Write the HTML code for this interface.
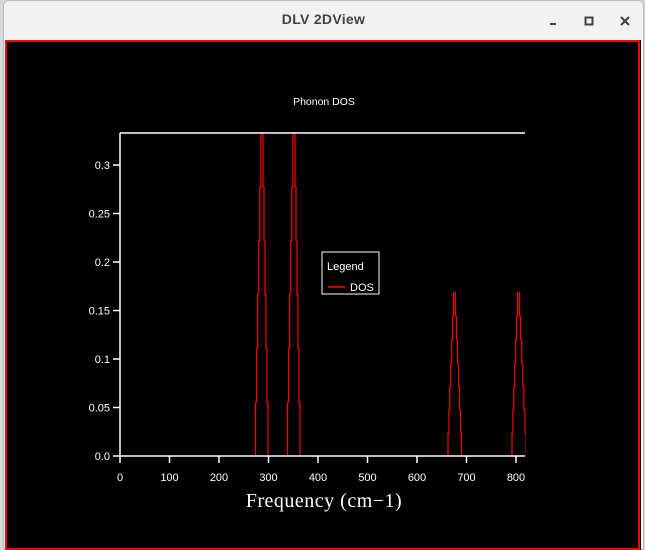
<!DOCTYPE html><html><head><style>
body{margin:0;width:645px;height:550px;overflow:hidden;background:#d8d8d8;font-family:"Liberation Sans",sans-serif}
#win{position:absolute;left:3px;top:0;width:641px;height:550px;background:#f2f2f2;border-radius:6px 6px 0 0;border:1px solid #bbb;box-sizing:border-box}
#title{position:absolute;left:0;right:0;top:10px;text-align:center;font-size:14px;color:#3c4548;font-weight:bold;letter-spacing:0.3px}
#plot{position:absolute;left:5px;top:40px;width:636px;height:510px}
</style></head><body>
<div id="win"><div id="title">DLV 2DView</div>
<svg style="position:absolute;right:84px;top:14px" width="12" height="12"><rect x="3" y="8" width="6" height="2" fill="#3c4548"/></svg>
<svg style="position:absolute;right:48px;top:14px" width="12" height="12"><rect x="2.5" y="2.5" width="7" height="7" fill="none" stroke="#3c4548" stroke-width="2"/></svg>
<svg style="position:absolute;right:12px;top:14px" width="12" height="12"><path d="M2 2L10 10M10 2L2 10" stroke="#3c4548" stroke-width="2.2"/></svg>
</div>
<svg id="plot" viewBox="5 40 636 510" width="636" height="510" style="position:absolute;left:5px;top:40px">
<rect x="5" y="40" width="636" height="510" fill="#000"/>
<rect x="6" y="41" width="633" height="508" fill="none" stroke="#f00" stroke-width="2"/>
<g id="g" font-family="Liberation Sans,sans-serif" font-size="11" fill="#fff"></g>
</svg>
<script>
var g=document.getElementById('g'),s='';
s+='<text x="324" y="105" text-anchor="middle" font-size="10.5">Phonon DOS</text>';
var ys=[0,0.05,0.1,0.15,0.2,0.25,0.3],yl=['0.0','0.05','0.1','0.15','0.2','0.25','0.3'];
ys.forEach(function(v,i){var y=456-v*970;s+='<path d="M113 '+y+'H120" stroke="#fff" stroke-width="1.5"/><text x="110" y="'+(y+4)+'" text-anchor="end">'+yl[i]+'</text>';});
for(var k=0;k<=800;k+=100){var x=120+k*0.495;s+='<path d="M'+x+' 456V463" stroke="#fff" stroke-width="1.5"/><text x="'+x+'" y="481" text-anchor="middle">'+k+'</text>';}
s+='<text x="324" y="507" text-anchor="middle" font-family="Liberation Serif,serif" font-size="20" letter-spacing="0.5">Frequency (cm\u22121)</text>';
function peak(l,r,c,top,n){var p=[],h=(456-top)/n,i,y;
 p.push(l+','+456);for(i=0;i<n;i++){var x=l+(c-l)*i/n;y=456-h*(i+1);p.push(x+','+(456-h*i));p.push(x+','+y);}
 p.push(c+','+top);
 for(i=n-1;i>=0;i--){var x=r-(r-c)*i/n;y=456-h*i;p.push(x+','+(456-h*(i+1)));p.push(x+','+y);}
 s+='<polyline points="'+p.join(' ')+'" fill="none" stroke="#f00" stroke-width="1.2"/>';}
peak(255.5,268,262,133,6);peak(287.5,300,294,133,6);peak(448,461.5,454.5,293,7);peak(512,526,518.5,293,7);
s+='<rect x="525.8" y="280" width="4" height="176" fill="#000"/>';
s+='<path d="M120 133H525M120 133V456H525" stroke="#fff" stroke-width="1.5" fill="none"/>';
s+='<rect x="322" y="252" width="57" height="42" fill="#000" stroke="#fff" stroke-width="1"/><text x="327" y="270">Legend</text><path d="M328 287H345" stroke="#f00" stroke-width="1.5"/><text x="350" y="291">DOS</text>';
g.innerHTML=s;
</script>
</body></html>
